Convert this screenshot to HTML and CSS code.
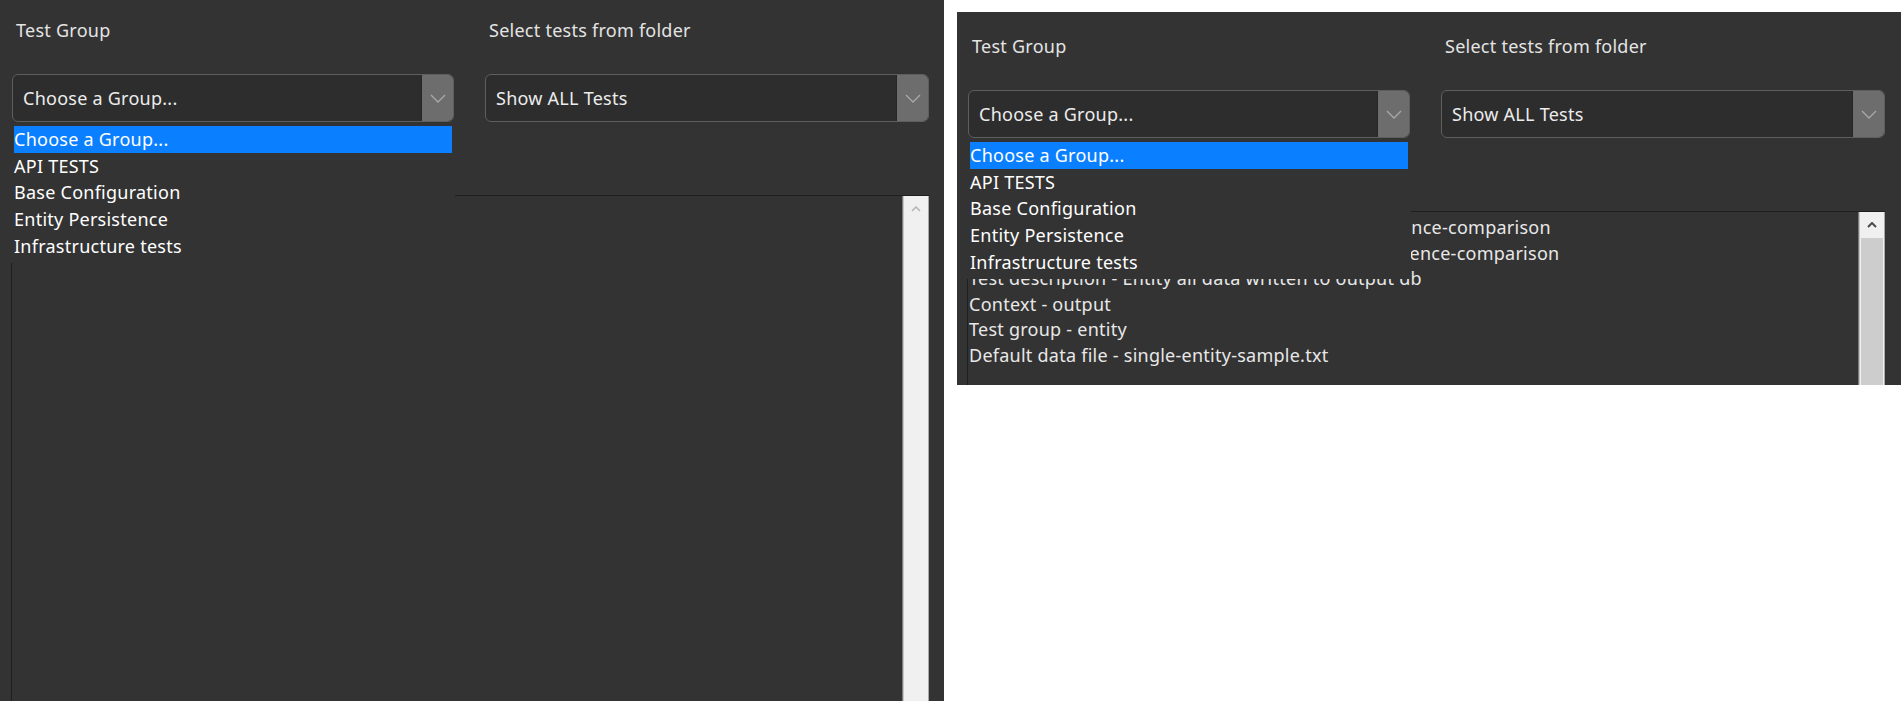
FILE: index.html
```html
<!DOCTYPE html>
<html lang="en">
<head>
<meta charset="utf-8">
<title>Test runner</title>
<link rel="stylesheet" href="styles.css">
</head>
<body>
  <section class="panel panel-main">
    <div class="widget">
      <div class="fields">
        <div class="field">
          <div class="label">Test Group</div>
          <div class="select">
            <span class="select-value">Choose a Group...</span>
            <span class="select-arrow"><svg width="16" height="9" viewBox="0 0 16 9"><polyline points="1,1 8,8 15,1" fill="none" stroke="#a9a9a9" stroke-width="1.3"/></svg></span>
          </div>
        </div>
        <div class="field">
          <div class="label">Select tests from folder</div>
          <div class="select">
            <span class="select-value">Show ALL Tests</span>
            <span class="select-arrow"><svg width="16" height="9" viewBox="0 0 16 9"><polyline points="1,1 8,8 15,1" fill="none" stroke="#a9a9a9" stroke-width="1.3"/></svg></span>
          </div>
        </div>
      </div>
      <div class="listbox">
        <div class="list-content"></div>
        <div class="scrollbar">
          <div class="scroll-up"><svg width="10" height="6" viewBox="0 0 10 6"><polyline points="1,5 5,1 9,5" fill="none" stroke="#b4b4b4" stroke-width="1.5"/></svg></div>
        </div>
      </div>
      <ul class="popup">
        <li class="popup-item is-selected">Choose a Group...</li>
        <li class="popup-item">API TESTS</li>
        <li class="popup-item">Base Configuration</li>
        <li class="popup-item">Entity Persistence</li>
        <li class="popup-item">Infrastructure tests</li>
      </ul>
    </div>
  </section>

  <section class="panel panel-crop">
    <div class="widget widget-shifted">
      <div class="fields">
        <div class="field">
          <div class="label">Test Group</div>
          <div class="select">
            <span class="select-value">Choose a Group...</span>
            <span class="select-arrow"><svg width="16" height="9" viewBox="0 0 16 9"><polyline points="1,1 8,8 15,1" fill="none" stroke="#a9a9a9" stroke-width="1.3"/></svg></span>
          </div>
        </div>
        <div class="field">
          <div class="label">Select tests from folder</div>
          <div class="select">
            <span class="select-value">Show ALL Tests</span>
            <span class="select-arrow"><svg width="16" height="9" viewBox="0 0 16 9"><polyline points="1,1 8,8 15,1" fill="none" stroke="#a9a9a9" stroke-width="1.3"/></svg></span>
          </div>
        </div>
      </div>
      <div class="listbox">
        <div class="list-content">
          <div class="list-line">Test title - entity-all-data-written-to-output-persistence-comparison</div>
          <div class="list-line">Test suite - entity-all-data-written-to-output-persistence-comparison</div>
          <div class="list-line">Test description - Entity all data written to output db</div>
          <div class="list-line">Context - output</div>
          <div class="list-line">Test group - entity</div>
          <div class="list-line">Default data file - single-entity-sample.txt</div>
        </div>
        <div class="scrollbar">
          <div class="scroll-up"><svg width="10" height="6" viewBox="0 0 10 6"><polyline points="1,5 5,1 9,5" fill="none" stroke="#4a4a4a" stroke-width="2"/></svg></div>
          <div class="scroll-thumb"></div>
        </div>
      </div>
      <ul class="popup">
        <li class="popup-item is-selected">Choose a Group...</li>
        <li class="popup-item">API TESTS</li>
        <li class="popup-item">Base Configuration</li>
        <li class="popup-item">Entity Persistence</li>
        <li class="popup-item">Infrastructure tests</li>
      </ul>
    </div>
  </section>
</body>
</html>
```

FILE: styles.css
```css
* {
  box-sizing: border-box;
}

body {
  margin: 0;
  background: #ffffff;
  display: flex;
  align-items: flex-start;
  gap: 13px;
  font-family: "Noto Sans", "Open Sans", sans-serif;
  font-size: 18px;
  letter-spacing: 0.25px;
}

.panel {
  flex: none;
  width: 944px;
  background: #333333;
  overflow: hidden;
}

.panel-main {
  height: 701px;
}

.panel-crop {
  height: 373px;
  margin-top: 12px;
}

.widget {
  position: relative;
  display: flex;
  flex-direction: column;
  padding-left: 11px;
}

.widget-shifted {
  margin: 4px 0 0 -1px;
}

.fields {
  display: grid;
  grid-template-columns: 442px 444px;
  column-gap: 31px;
  padding: 17px 0 0 1px;
}

.field {
  display: flex;
  flex-direction: column;
  gap: 31px;
}

.label {
  line-height: 26px;
  padding-left: 4px;
  color: #e4e4e4;
}

.select {
  display: flex;
  height: 48px;
  border: 1px solid #5e5e5e;
  border-radius: 6px;
  background: #2d2d2d;
  overflow: hidden;
}

.select-value {
  flex: 1;
  display: flex;
  align-items: center;
  padding-left: 10px;
  color: #ececec;
}

.select-arrow {
  flex: none;
  width: 32px;
  display: flex;
  align-items: center;
  justify-content: center;
  background: #6d6d6d;
  border-left: 1px solid #262626;
}

.listbox {
  display: flex;
  width: 918px;
  height: 520px;
  margin-top: 73px;
  border-top: 1px solid #1e1e1e;
  border-left: 1px solid #1e1e1e;
}

.list-content {
  flex: 1;
  padding: 3px 0 0 1px;
  line-height: 25.5px;
  color: #e8e8e8;
  white-space: nowrap;
  overflow: hidden;
}

.scrollbar {
  flex: none;
  width: 27px;
  display: flex;
  flex-direction: column;
  background: #f0f0f0;
  border-left: 1px solid #7a7a7a;
  border-right: 1px solid #a8a8a8;
  box-shadow: inset 1px 0 #c6c6c6;
}

.scroll-up {
  flex: none;
  height: 26px;
  display: flex;
  align-items: center;
  justify-content: center;
}

.scroll-thumb {
  flex: 1;
  margin: 0 1px 0 2px;
  background: #cdcdcd;
}

.popup {
  position: absolute;
  top: 125px;
  left: 11px;
  width: 444px;
  margin: 0;
  padding: 1px 3px 4px;
  list-style: none;
  background: #333333;
}

.popup-item {
  height: 26.67px;
  line-height: 26.67px;
  color: #ffffff;
  white-space: nowrap;
}

.popup-item.is-selected {
  background: #0a7fff;
}
```
